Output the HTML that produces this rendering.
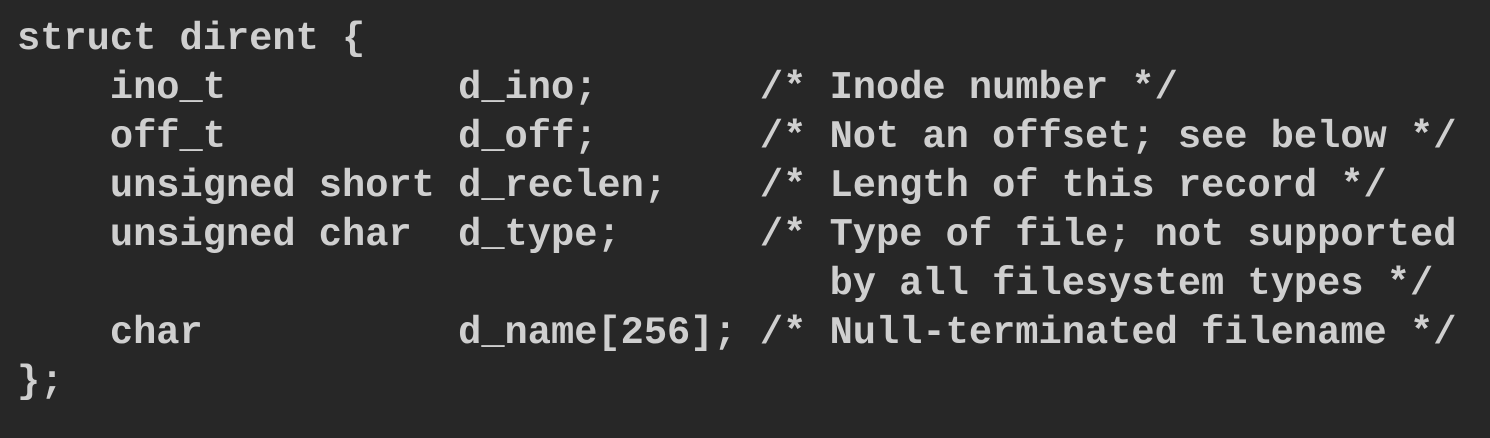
<!DOCTYPE html>
<html><head><style>
html,body{margin:0;padding:0;background:#272727;width:1490px;height:438px;overflow:hidden}
pre{position:absolute;left:17px;top:15px;margin:0;font-family:"Liberation Mono",monospace;font-size:38.7px;line-height:49px;color:#cfcfcf;font-weight:bold;letter-spacing:0}
</style></head><body>
<pre>struct dirent {
    ino_t          d_ino;       /* Inode number */
    off_t          d_off;       /* Not an offset; see below */
    unsigned short d_reclen;    /* Length of this record */
    unsigned char  d_type;      /* Type of file; not supported
                                   by all filesystem types */
    char           d_name[256]; /* Null-terminated filename */
};</pre>
</body></html>
